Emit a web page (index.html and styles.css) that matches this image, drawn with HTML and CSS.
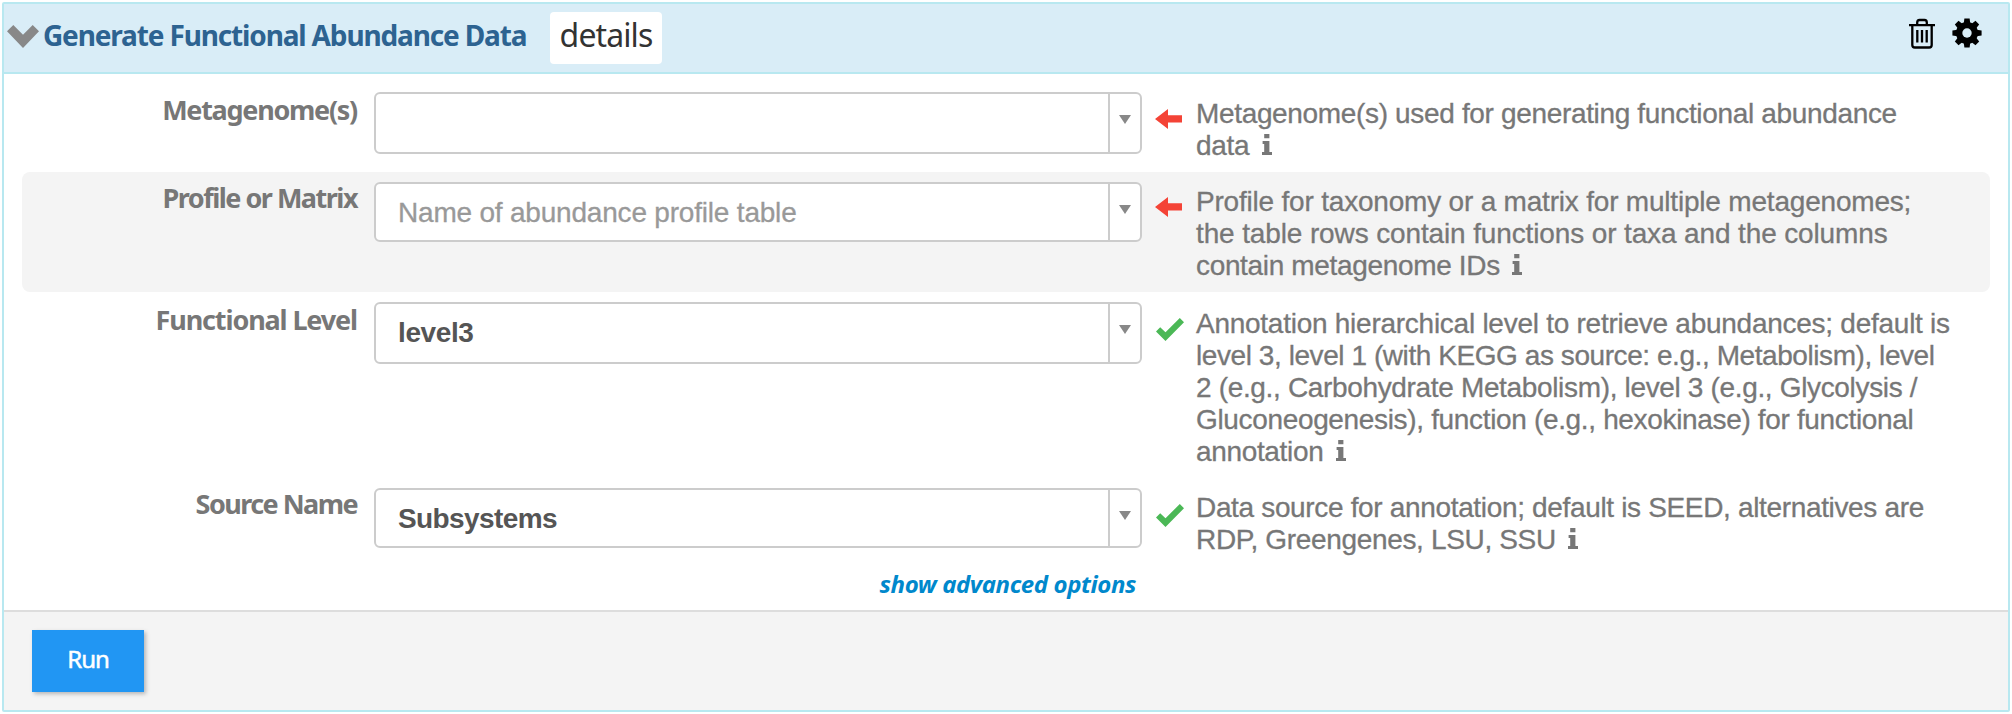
FILE: index.html
```
<!DOCTYPE html>
<html lang="en">
<head>
<meta charset="utf-8">
<title>Generate Functional Abundance Data</title>
<link rel="stylesheet" href="styles.css">
</head>
<body>
<svg class="sprite" aria-hidden="true">
  <symbol id="info" viewBox="0 0 10 21"><path d="M2.2 0h5.2v4.2H2.2zM0.6 7h6.8v11H10v3H0v-3h2.2v-8H0.6z"/></symbol>
  <symbol id="arrow" viewBox="0 0 27 20"><path d="M0 10 13 0v6.3h14v7.2H13V20z"/></symbol>
  <symbol id="check" viewBox="0 0 28 23"><path d="M0 13.5 4.2 9.3 9.5 14.3 23.8 0 28 4.2 9.5 23z"/></symbol>
</svg>
<main class="card">
  <header class="head">
    <svg class="chevron" viewBox="0 0 32 23"><path d="M0 6.200 6.300 0 16 9.800 25.700 0 32 6.200 16 23z"/></svg>
    <h1 class="title">Generate Functional Abundance Data</h1>
    <span class="details">details</span>
    <div class="tools">
      <svg class="trash" viewBox="0 0 26 31"><g fill="none" stroke="#000" stroke-width="2.3"><path d="M0 7.200h26M8.200 7V4.500Q8.200 2 10.500 2h5Q17.800 2 17.800 4.500V7M3.300 7.500v19.500q0 2.500 2.500 2.500h14.400q2.500 0 2.500-2.500V7.500"/><path d="M8.300 12v12.500M13 12v12.500M17.700 12v12.500"/></g></svg>
      <svg class="gear" viewBox="-15 -15 30 30"><g><circle r="11"/><path id="t" d="M-3.300-9.500-2.600-14.600H2.600L3.300-9.500V9.500L2.600 14.600H-2.600L-3.300 9.500z"/><use href="#t" transform="rotate(45)"/><use href="#t" transform="rotate(90)"/><use href="#t" transform="rotate(135)"/></g><circle r="4.700" fill="#d9edf7"/></svg>
    </div>
  </header>
  <section class="form">
    <div class="row row-first">
      <label class="label l1">Metagenome(s)</label>
      <div class="select tall"><span class="value"></span><span class="caret"></span></div>
      <svg class="mark arrow"><use href="#arrow"/></svg>
      <p class="help">Metagenome(s) used for generating functional abundance<br>data <svg class="info"><use href="#info"/></svg></p>
    </div>
    <div class="row row-second">
      <label class="label l2">Profile or Matrix</label>
      <div class="select"><span class="value placeholder">Name of abundance profile table</span><span class="caret"></span></div>
      <svg class="mark arrow"><use href="#arrow"/></svg>
      <p class="help"><span class="loose">Profile for taxonomy or a matrix for multiple metagenomes;</span><br><span class="looser">the table rows contain functions or taxa and the columns</span><br>contain metagenome IDs <svg class="info"><use href="#info"/></svg></p>
    </div>
    <div class="row row-third">
      <label class="label l3">Functional Level</label>
      <div class="select tall"><span class="value v3">level3</span><span class="caret"></span></div>
      <svg class="mark check"><use href="#check"/></svg>
      <p class="help"><span class="medium">Annotation hierarchical level to retrieve abundances; default is</span><br><span class="tight">level 3, level 1 (with KEGG as source: e.g., Metabolism), level</span><br>2 (e.g., Carbohydrate Metabolism), level 3 (e.g., Glycolysis /<br>Gluconeogenesis), function (e.g., hexokinase) for functional<br>annotation <svg class="info"><use href="#info"/></svg></p>
    </div>
    <div class="row row-fourth">
      <label class="label l4">Source Name</label>
      <div class="select"><span class="value v4">Subsystems</span><span class="caret"></span></div>
      <svg class="mark check"><use href="#check"/></svg>
      <p class="help">Data source for annotation; default is SEED, alternatives are<br>RDP, Greengenes, LSU, SSU <svg class="info"><use href="#info"/></svg></p>
    </div>
    <a class="advanced">show advanced options</a>
  </section>
  <footer class="foot"><button class="run">Run</button></footer>
</main>
</body>
</html>
```
FILE: styles.css
```
* { box-sizing: border-box; }
body { margin: 0; padding: 2px; height: 714px; overflow: hidden; background: #fff; font-family: "Liberation Sans", Arial, sans-serif; }
.sprite { position: absolute; width: 0; height: 0; }
.card { width: 2008px; height: 710px; border: 2px solid #b8e8f0; border-radius: 2px; display: flex; flex-direction: column; }
.head { height: 70px; flex: none; background: #d9edf7; border-bottom: 2px solid #b8e8f0; display: flex; align-items: flex-start; padding-left: 3px; }
.chevron { width: 32px; height: 23px; margin-top: 21px; fill: #888; flex: none; }
.title { margin: 12px 0 0 4px; width: 507px; flex: none; font: bold 28px/38px "Noto Sans", sans-serif; color: #2d6391; letter-spacing: -1.15px; white-space: nowrap; }
.details { width: 112px; height: 52px; margin-top: 8px; background: #fff; border-radius: 4px; text-align: center; font: 32px/46px "Noto Sans", sans-serif; color: #333; letter-spacing: -0.9px; }
.tools { margin: 14px 26px 0 auto; display: flex; gap: 17px; }
.trash { width: 26px; height: 31px; }
.gear { width: 30px; height: 30px; }
.form { height: 536px; flex: none; padding: 8px 18px 0; }
.row { display: grid; grid-template-columns: 352px 768px 54px 1fr; padding-top: 10px; align-items: start; }
.row-first { height: 90px; }
.row-second { height: 120px; background: #f4f4f4; border-radius: 8px; }
.row-third { height: 186px; }
.row-fourth { height: 82px; }
.label { text-align: right; padding-right: 17px; font: bold 27px/36px "Noto Sans", sans-serif; color: #777; white-space: nowrap; }
.l1 { letter-spacing: -1.27px; }
.l2 { letter-spacing: -1.5px; margin-top: -2px; }
.l3 { letter-spacing: -1.13px; }
.l4 { letter-spacing: -1.55px; margin-top: -2px; }
.select { height: 60px; border: 2px solid #ccc; border-radius: 6px; background: #fff; display: flex; overflow: hidden; }
.tall { height: 62px; }
.value { flex: 1; padding-left: 22px; font-size: 28px; line-height: 57px; font-weight: bold; color: #555; white-space: nowrap; }
.placeholder { font-weight: normal; color: #999; letter-spacing: -0.2px; -webkit-text-stroke: 0.3px #999; }
.v3 { letter-spacing: -0.4px; }
.v4 { letter-spacing: -0.6px; }
.caret { width: 32px; border-left: 2px solid #ccc; display: flex; justify-content: center; padding-top: 21px; }
.caret::after { content: ""; width: 12px; height: 9px; background: #888; clip-path: polygon(0 0, 100% 0, 50% 100%); }
.mark { margin-left: 13px; }
.arrow { width: 27px; height: 20px; margin-top: 17px; fill: #f44336; }
.row-second .arrow { margin-top: 15px; }
.check { width: 28px; height: 23px; margin-top: 16px; margin-left: 14px; fill: #4bb856; }
.help { margin: 6px 0 0; font-size: 28px; line-height: 32px; color: #777; white-space: nowrap; letter-spacing: -0.34px; -webkit-text-stroke: 0.3px #777; }
.row-second .help, .row-fourth .help { margin-top: 4px; }
.loose { letter-spacing: -0.2px; }
.looser { letter-spacing: -0.13px; }
.medium { letter-spacing: -0.26px; }
.tight { letter-spacing: -0.43px; }
.info { width: 10px; height: 21px; margin-left: 5px; fill: #777; vertical-align: baseline; }
.advanced { display: block; width: 1114px; padding-top: 8px; text-align: right; font: italic bold 24px/32px "Noto Sans", sans-serif; color: #0088cc; letter-spacing: -0.4px; }
.foot { flex: 1; border-top: 2px solid #ddd; background: #f4f4f4; padding: 18px 0 0 28px; }
.run { display: block; width: 112px; height: 62px; border: 0; padding: 0 0 4px; background: #2196f3; color: #fff; font: 24px/58px "Noto Sans", sans-serif; letter-spacing: -1px; -webkit-text-stroke: 0.5px #fff; box-shadow: 2px 2px 4px rgba(0,0,0,.25); }
```
